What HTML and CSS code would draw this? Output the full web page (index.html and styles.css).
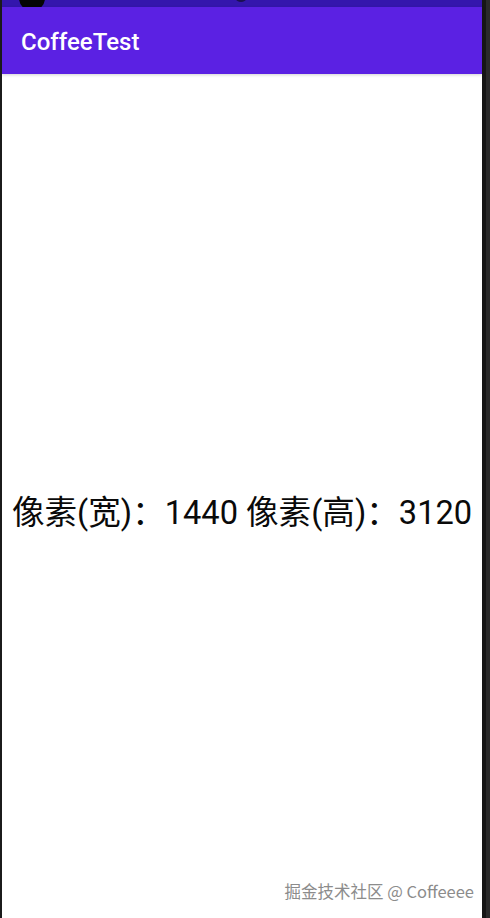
FILE: index.html
```html
<!DOCTYPE html>
<html lang="zh">
<head>
<meta charset="utf-8">
<title>CoffeeTest</title>
<link rel="stylesheet" href="styles.css">
</head>
<body>
<div class="device">
  <div class="screen">
    <div class="status-bar">
      <span class="cutout"></span>
      <span class="dot"></span>
    </div>
    <header class="app-bar">
      <h1 class="title">CoffeeTest</h1>
    </header>
    <main class="content">
      <p class="info">像素(宽)：1440 像素(高)：3120</p>
    </main>
    <div class="watermark">掘金技术社区 @ Coffeeee</div>
  </div>
  <div class="edge"></div>
</div>
</body>
</html>
```
FILE: styles.css
```css
html, body {
  margin: 0;
  padding: 0;
  background: #ffffff;
}
.device {
  width: 490px;
  height: 918px;
  display: flex;
  background: #1b1b1b;
  overflow: hidden;
}
.screen {
  position: relative;
  margin-left: 2px;
  width: 480px;
  height: 918px;
  display: flex;
  flex-direction: column;
  background: #ffffff;
}
.edge {
  flex: 1;
  background: linear-gradient(to right, #161616 0, #161616 4px, #2a2a2a 4px);
}
.status-bar {
  position: relative;
  height: 7px;
  background: #3416ad;
  flex: none;
}
.cutout {
  position: absolute;
  left: 17px;
  top: -15px;
  width: 26px;
  height: 26px;
  border-radius: 50%;
  background: #050505;
}
.dot {
  position: absolute;
  left: 234px;
  top: -4px;
  width: 10px;
  height: 6px;
  border-radius: 50%;
  background: #1c1050;
}
.app-bar {
  height: 67px;
  background: #5b21e3;
  display: flex;
  align-items: center;
  padding-left: 19px;
  flex: none;
  box-shadow: 0 1px 3px rgba(0, 0, 0, 0.18);
  position: relative;
  z-index: 1;
}
.title {
  margin: 0;
  font-family: Roboto, "Noto Sans", sans-serif;
  font-weight: 500;
  font-size: 24px;
  color: #ffffff;
  padding-top: 3px;
}
.content {
  flex: 1;
  display: flex;
  align-items: center;
  justify-content: center;
  padding-top: 26px;
}
.info {
  margin: 0;
  font-family: Roboto, "Noto Sans CJK SC", sans-serif;
  font-size: 32.6px;
  color: #0a0a0a;
  white-space: nowrap;
}
.watermark {
  position: absolute;
  right: 8px;
  bottom: 15px;
  font-family: "Noto Sans CJK SC", "Open Sans", sans-serif;
  font-size: 16.5px;
  color: #8c8c8c;
  text-shadow: 0 0 1px #ffffff;
}
```
